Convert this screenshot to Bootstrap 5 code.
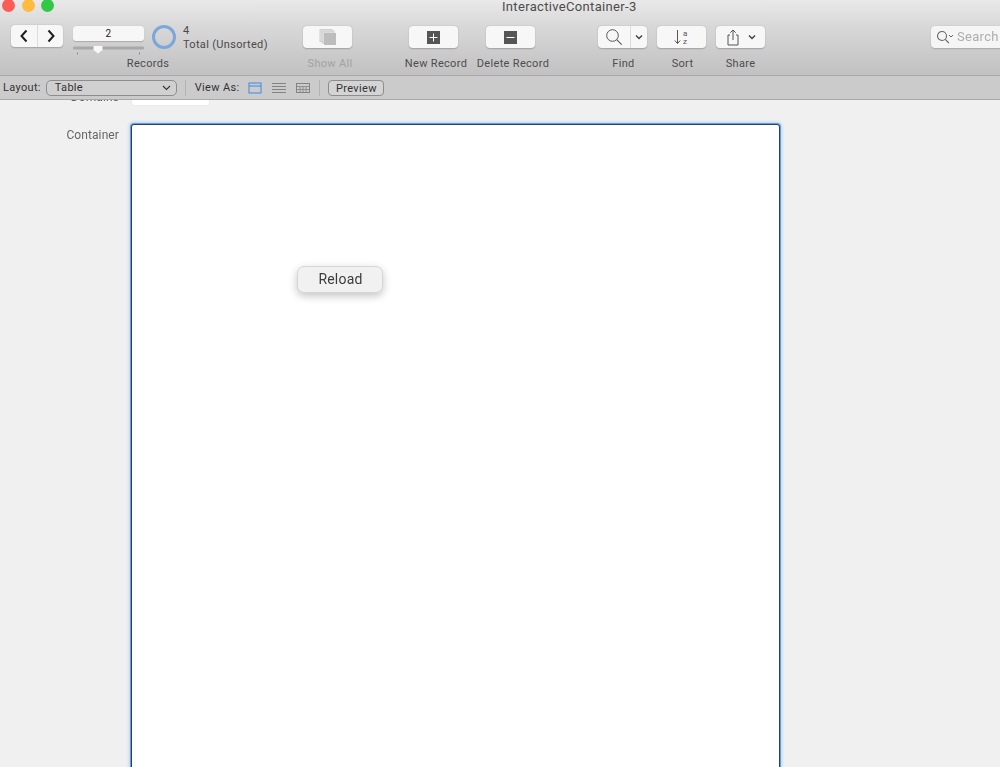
<!DOCTYPE html>
<html lang="en">
<head>
<meta charset="utf-8">
<title>InteractiveContainer-3</title>
<link href="https://cdn.jsdelivr.net/npm/bootstrap@5.3.0/dist/css/bootstrap.min.css" rel="stylesheet">
<style>
html,body{height:100%;overflow:hidden;background:#f0f0f0}
body{font-family:Roboto,"Liberation Sans",sans-serif;font-size:11px;color:#4a4a4a;letter-spacing:.32px}
.app-shell{height:767px;width:1000px;overflow:hidden;filter:blur(.3px)}
.head-zone{height:76px;background:linear-gradient(#e9e9e9,#d8d8d8 35%,#c1c1c1);border-bottom:1px solid #a9a9a9;flex:none}
.title-row{height:26px}
.light{width:13px;height:13px;border-radius:50%;margin-top:-1px;flex:none}
.l-red{background:#fc5c57;margin-left:2px}
.l-yel{background:#fdbc40;margin-left:7px}
.l-grn{background:#33c748;margin-left:6px}
.win-title{margin-left:448px;font-size:13px;line-height:13px;color:#4c4c4c;letter-spacing:.33px;white-space:nowrap}
.tool-row{padding-left:11px}
.tool-item{display:flex;flex-direction:column;align-items:center;flex:none;width:49px}
.tool-top{height:22px}
.tool-btn{height:22px;width:49px;background:#f7f7f7;border-radius:4px;box-shadow:0 .5px 1.5px rgba(0,0,0,.22);display:flex;align-items:center;justify-content:center;flex:none}
.tool-label{margin-top:9px;line-height:14px;white-space:nowrap;color:#4d4d4d}
.shift-lab{padding-left:5px}
.shift-one{padding-left:2px}
.lab-off{color:#a2a2a2}
.tool-item.w-rec{width:274px}
.m-show{margin-left:18px}.m-new{margin-left:57px}.m-del{margin-left:28px}.m-find{margin-left:63px}.m-sort{margin-left:10px}.m-share{margin-left:10px}.m-search{margin-left:166px}
.nav-pair{width:52px;height:22px;margin-top:-1px;background:#f7f7f7;border-radius:4px;box-shadow:0 .5px 1.5px rgba(0,0,0,.22)}
.seg{display:flex;align-items:center;justify-content:center;height:100%}
.seg-a{width:27px;border-right:1px solid #dcdcdc}.seg-b{width:25px}
.slide-col{width:71px;margin-left:10px}
.num-field{height:15px;background:#f7f7f7;border-radius:3px;box-shadow:0 .5px 1px rgba(0,0,0,.18);font-size:10px;line-height:15px;text-align:center;color:#222}
.pie{margin-left:8px;margin-top:-1px;flex:none}
.rec-text{margin-left:7px;line-height:14px;margin-top:-2px;white-space:nowrap}
.search-box{width:100px;height:22px;background:#f5f5f5;border-radius:4px;box-shadow:0 .5px 1.5px rgba(0,0,0,.18);display:flex;align-items:center;padding-left:5px;flex:none}
.search-hint{font-size:13px;color:#adadad;margin-left:3px;letter-spacing:.3px}
.drop-split{width:33px;border-right:1px solid #dcdcdc;height:100%;display:flex;align-items:center;justify-content:center}
.drop-rest{width:16px;display:flex;align-items:center;justify-content:center;height:100%}
.layout-zone{height:24px;background:#cbcbcb;border-bottom:1px solid #a8a8a8;padding-left:3px;flex:none;position:relative;z-index:2}
.layout-zone span{white-space:nowrap;color:#333;padding-top:1px}
.pick-box{width:131px;height:16px;margin-left:5px;border:1px solid #8d8d8d;border-radius:5px;padding:0 5px 0 8px;color:#333;background:#d0d0d0}
.vr-line{width:1px;height:16px;background:#b4b4b4;flex:none}
.prev-btn{width:56px;height:16px;border:1px solid #8d8d8d;border-radius:4px;background:#d4d4d4;line-height:15px;text-align:center;color:#333;margin-left:8px}
.sp-9{margin-left:9px}.sp-10{margin-left:10px}
.body-zone{flex:1;overflow:hidden;background:#f0f0f0;min-height:0}
.clip-row{height:39px;margin-top:-15px}
.field-cap{width:119px;text-align:right;font-size:12px;color:#666;letter-spacing:.1px;flex:none}
.cap-clip{padding-top:3px}
.mini-field{width:77px;height:20px;margin-left:13px;background:#fff;border-radius:0 0 2px 2px;box-shadow:0 0 1px rgba(0,0,0,.2)}
.cont-row{align-items:flex-start}
.cont-frame{width:649px;height:680px;margin-left:12px;background:#fff;border:1.5px solid #2b3f5f;border-radius:3px;box-shadow:0 0 0 1px #5f9fe0,0 0 3px 2px rgba(110,170,235,.4);padding:141px 0 0 165px;flex:none}
.cap-top{margin-top:4px;line-height:14px}
.reload-btn{width:86px;height:27px;padding:0 0 0 1px;font-size:14px;font-family:inherit;color:#3c3c3c;background:#f1f1f1;border:1px solid #d6d6d6;border-radius:7px;box-shadow:0 3px 9px rgba(0,0,0,.24);letter-spacing:.2px}
</style>
</head>
<body>
<div class="app-shell d-flex flex-column">
  <div class="head-zone">
    <div class="title-row d-flex align-items-start">
      <div class="light l-red"></div><div class="light l-yel"></div><div class="light l-grn"></div>
      <div class="win-title">InteractiveContainer-3</div>
    </div>
    <div class="tool-row d-flex align-items-start">
      <div class="tool-item w-rec">
        <div class="tool-top d-flex align-items-start w-100">
          <div class="nav-pair d-flex flex-none">
            <div class="seg seg-a"><svg width="10" height="14" viewBox="0 0 10 14"><polyline points="7.500,1.500 2.500,7 7.500,12.500" fill="none" stroke="#1e1e1e" stroke-width="2"/></svg></div>
            <div class="seg seg-b"><svg width="10" height="14" viewBox="0 0 10 14"><polyline points="2.500,1.500 7.500,7 2.500,12.500" fill="none" stroke="#1e1e1e" stroke-width="2"/></svg></div>
          </div>
          <div class="slide-col">
            <div class="num-field">2</div>
            <svg class="d-block mt-1" width="71" height="13" viewBox="0 0 71 13"><rect x="0" y="1.500" width="71" height="3" rx="1" fill="#a9a9a9"/><polygon points="20.500,1 29.500,1 29.500,5 25,8.500 20.500,5" fill="#f8f8f8"/><rect x="4" y="7.500" width="1" height="2" fill="#8a8a8a"/><rect x="66" y="7.500" width="1" height="2" fill="#8a8a8a"/></svg>
          </div>
          <svg class="pie" width="24" height="24" viewBox="0 0 24 24"><circle cx="12" cy="12" r="10.500" fill="none" stroke="#7ba7da" stroke-width="3"/></svg>
          <div class="rec-text"><div>4</div><div>Total (Unsorted)</div></div>
        </div>
        <div class="tool-label">Records</div>
      </div>
      <div class="tool-item m-show">
        <div class="tool-btn"><svg width="18" height="16" viewBox="0 0 18 16"><rect x="1" y="0.500" width="12" height="12" fill="#e4e4e4" stroke="#cfcfcf"/><rect x="3" y="2" width="12" height="12" fill="#dcdcdc" stroke="#cfcfcf"/><rect x="5" y="4" width="12" height="12" fill="#bdbdbd"/></svg></div>
        <div class="tool-label lab-off shift-lab">Show All</div>
      </div>
      <div class="tool-item m-new">
        <div class="tool-btn"><svg width="13" height="13" viewBox="0 0 13 13"><rect width="13" height="13" fill="#555"/><path d="M6.500 2.500v8M2.500 6.500h8" stroke="#fff" stroke-width="1"/></svg></div>
        <div class="tool-label shift-lab">New Record</div>
      </div>
      <div class="tool-item m-del">
        <div class="tool-btn"><svg width="13" height="13" viewBox="0 0 13 13"><rect width="13" height="13" fill="#555"/><path d="M2.500 6.500h8" stroke="#fff" stroke-width="1"/></svg></div>
        <div class="tool-label shift-lab">Delete Record</div>
      </div>
      <div class="tool-item m-find">
        <div class="tool-btn">
          <div class="drop-split"><svg width="18" height="18" viewBox="0 0 18 18"><circle cx="7.500" cy="7.500" r="5.800" fill="none" stroke="#555" stroke-width="1"/><path d="M11.700 11.700l5 5" stroke="#555" stroke-width="1.100"/></svg></div>
          <div class="drop-rest"><svg width="8" height="6" viewBox="0 0 8 6"><polyline points="1,1.500 4,4.500 7,1.500" fill="none" stroke="#444" stroke-width="1.500"/></svg></div>
        </div>
        <div class="tool-label shift-one">Find</div>
      </div>
      <div class="tool-item m-sort">
        <div class="tool-btn"><svg width="16" height="16" viewBox="0 0 16 16"><path d="M3.500 1v13.500M.8 11.500l2.700 3 2.700-3" fill="none" stroke="#555" stroke-width="1"/><text x="9" y="6.500" font-size="8" font-family="Roboto,sans-serif" fill="#555">a</text><text x="9" y="14.500" font-size="8" font-family="Roboto,sans-serif" fill="#555">z</text></svg></div>
        <div class="tool-label shift-one">Sort</div>
      </div>
      <div class="tool-item m-share">
        <div class="tool-btn">
          <svg width="14" height="17" viewBox="0 0 14 17"><path d="M4 6H2v10h10V6h-2" fill="none" stroke="#555" stroke-width="1"/><path d="M7 11V1M4.300 3.700L7 1l2.700 2.700" fill="none" stroke="#555" stroke-width="1"/></svg>
          <svg class="ms-2" width="8" height="6" viewBox="0 0 8 6"><polyline points="1,1.500 4,4.500 7,1.500" fill="none" stroke="#444" stroke-width="1.500"/></svg>
        </div>
        <div class="tool-label">Share</div>
      </div>
      <div class="search-box m-search">
        <svg width="18" height="14" viewBox="0 0 18 14"><circle cx="6" cy="6" r="4.500" fill="none" stroke="#666" stroke-width="1.100"/><path d="M9.300 9.300l3.500 3.700" stroke="#666" stroke-width="1.100"/><polyline points="13,5 15,7 17,5" fill="none" stroke="#666" stroke-width="1"/></svg>
        <span class="search-hint">Search</span>
      </div>
    </div>
  </div>

  <div class="layout-zone d-flex align-items-center">
    <span>Layout:</span>
    <div class="pick-box d-flex align-items-center justify-content-between">
      <span>Table</span>
      <svg width="9" height="6" viewBox="0 0 9 6"><polyline points="1,1 4.500,4.500 8,1" fill="none" stroke="#333" stroke-width="1.100"/></svg>
    </div>
    <div class="vr-line ms-2"></div>
    <span class="sp-9">View As:</span>
    <svg class="sp-9" width="14" height="12" viewBox="0 0 14 12"><rect x="1" y="1" width="12" height="10" fill="none" stroke="#3d8be8" stroke-width="1"/><path d="M1 4h12" stroke="#3d8be8"/></svg>
    <svg class="sp-10" width="14" height="12" viewBox="0 0 14 12"><path d="M0 1.500h14M0 4.500h14M0 7.500h14M0 10.500h14" stroke="#838383"/></svg>
    <svg class="sp-10" width="14" height="12" viewBox="0 0 14 12"><rect x=".5" y="1.500" width="13" height="9" fill="none" stroke="#838383"/><path d="M.5 4.500h13M.5 7.500h13M4 4.500v6M7 4.500v6M10 4.500v6" stroke="#838383" stroke-width=".8"/></svg>
    <div class="vr-line sp-9"></div>
    <div class="prev-btn">Preview</div>
  </div>

  <div class="body-zone">
    <div class="clip-row d-flex">
      <div class="field-cap cap-clip">Domains</div>
      <div class="mini-field"></div>
    </div>
    <div class="cont-row d-flex">
      <div class="field-cap cap-top">Container</div>
      <div class="cont-frame">
        <button type="button" class="btn reload-btn">Reload</button>
      </div>
    </div>
  </div>
</div>
<script src="https://cdn.jsdelivr.net/npm/bootstrap@5.3.0/dist/js/bootstrap.bundle.min.js"></script>
</body>
</html>
